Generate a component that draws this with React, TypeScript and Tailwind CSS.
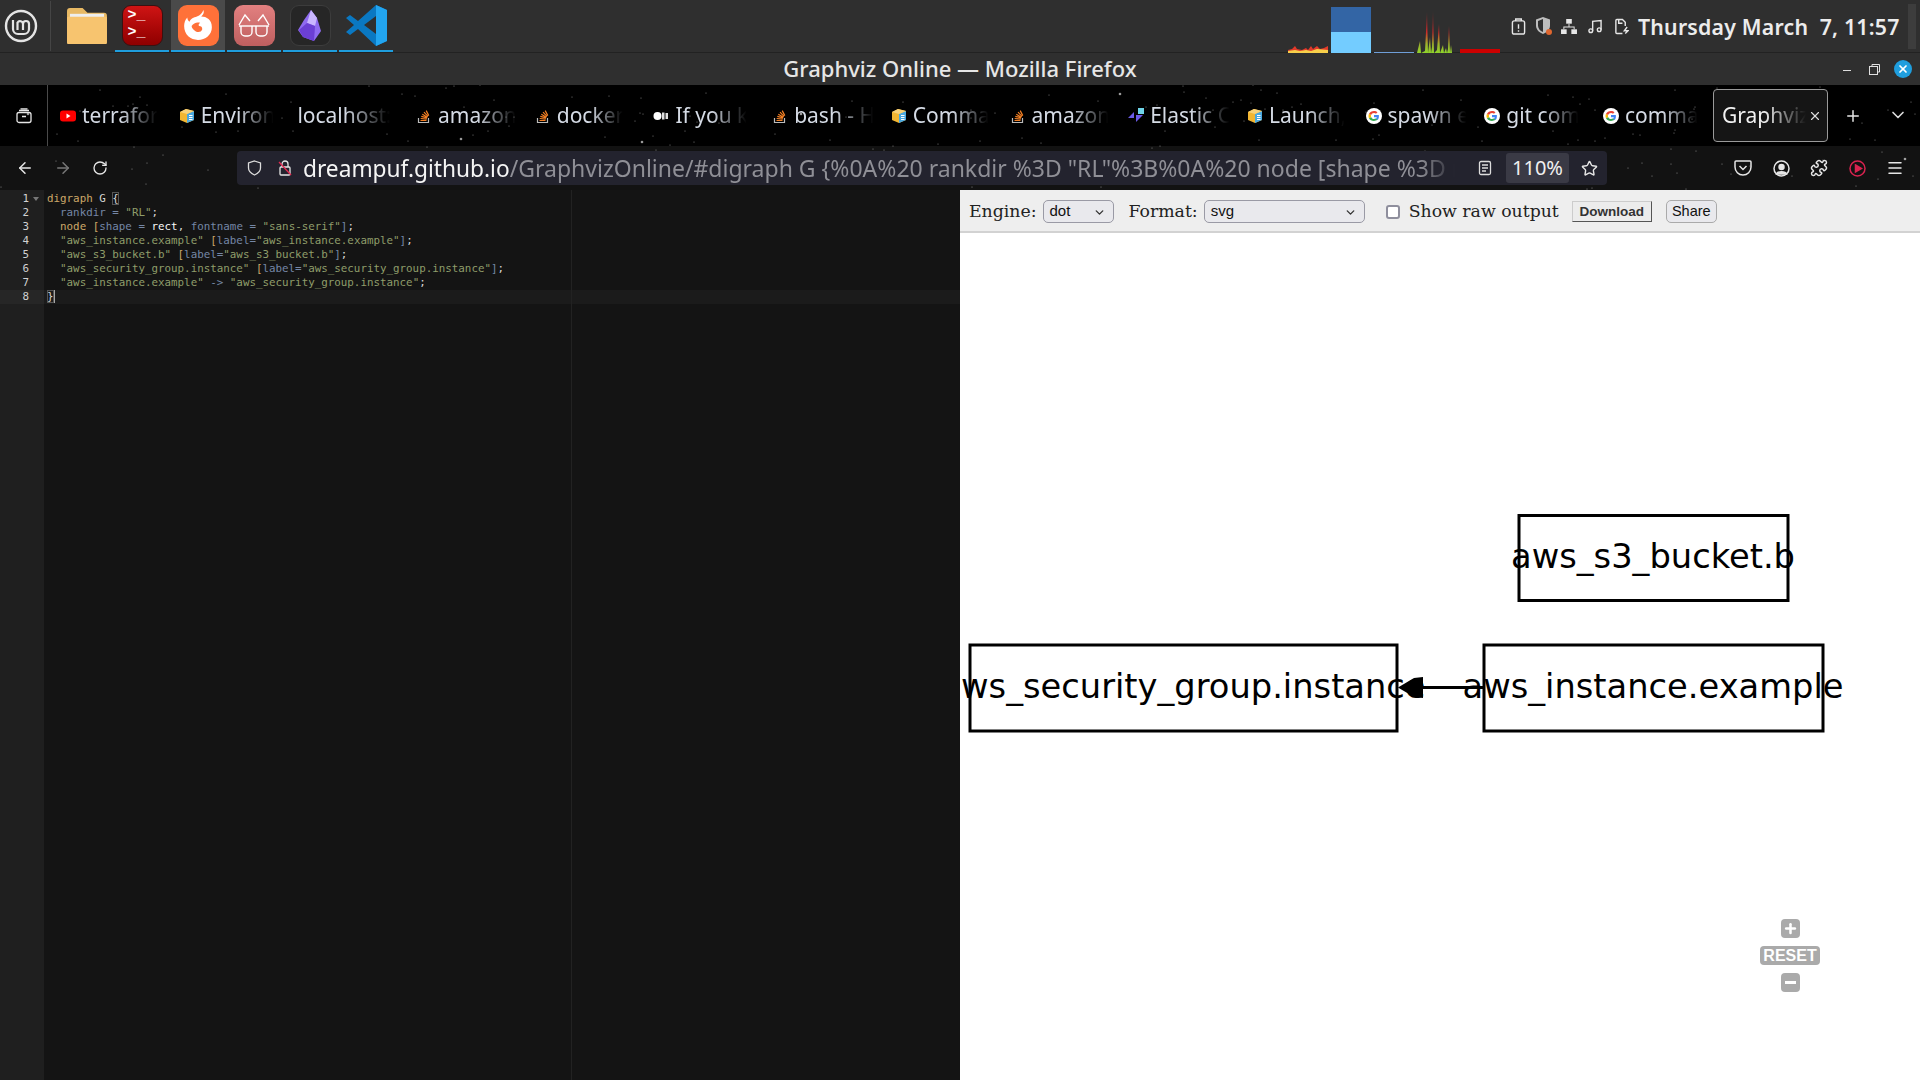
import { ChevronDown, Plus, X, ArrowLeft, ArrowRight, RotateCw, Star, Menu, Puzzle } from "lucide-react";

const UI = "font-['Noto_Sans','Open_Sans',sans-serif]";

// fixed star field that sits behind the firefox theme
const stars: [number, number, number][] = [];
let seed = 7;
for (let i = 0; i < 230; i++) {
  seed = (seed * 7919 + 13) % 104729;
  const x = seed % 1920;
  seed = (seed * 7919 + 13) % 104729;
  const y = 85 + (seed % 105);
  seed = (seed * 7919 + 13) % 104729;
  stars.push([x, y, seed % 23 === 0 ? 1.3 : 0.5]);
}

function Stars({ top, height }: { top: number; height: number }) {
  return (
    <svg width="1920" height={height} viewBox={`0 ${top} 1920 ${height}`} className="absolute left-0 top-0 pointer-events-none">
      {stars.map(([x, y, r], i) => (
        <circle key={i} cx={x} cy={y} r={r} fill="#ffffff" opacity={0.6} />
      ))}
    </svg>
  );
}

function Favicon({ kind }: { kind: string }) {
  if (kind === "yt")
    return (
      <svg width="16" height="16" viewBox="0 0 16 16">
        <rect y="2.5" width="16" height="11" rx="3" fill="#f00" />
        <path d="M6.5 5.5v5l4-2.5z" fill="#fff" />
      </svg>
    );
  if (kind === "box")
    return (
      <svg width="16" height="16" viewBox="0 0 16 16">
        <path d="M1 4l6-3 8 2v9l-7 3-7-3z" fill="#f2b632" />
        <path d="M8 6l7-3v9l-7 3z" fill="#4aa8e0" />
        <path d="M1 4l7 2 7-3-8-2z" fill="#f8d27a" />
        <path d="M10 7.5h3.5M10 9.5h3.5M10 11.5h3.5" stroke="#fff" strokeWidth="1" />
      </svg>
    );
  if (kind === "so")
    return (
      <svg width="14" height="16" viewBox="0 0 14 16">
        <path d="M1.5 10v4.5h10V10" fill="none" stroke="#bbb" strokeWidth="1.2" />
        <path d="M3.5 12.5h6M3.7 10.5l6 .6M4.3 8.3l5.8 1.6M5.3 6.2l5.2 3M7 4.2l4 4.2M9.2 2.6l2.6 5" stroke="#f48024" strokeWidth="1.2" />
      </svg>
    );
  if (kind === "dots")
    return (
      <svg width="16" height="16" viewBox="0 0 16 16">
        <circle cx="4.5" cy="8" r="4" fill="#fff" />
        <path d="M9 4.5h2.5v7H9zM12.5 5h2.5v6h-2.5z" fill="#ddd" />
      </svg>
    );
  if (kind === "elastic")
    return (
      <svg width="16" height="16" viewBox="0 0 16 16">
        <path d="M0 10l6-6v6z" fill="#6b5be6" />
        <path d="M10 0h6v6h-6z" fill="#6fd4e8" />
        <path d="M8 7h7l-7 7v-5z" fill="#6b5be6" />
      </svg>
    );
  if (kind === "g")
    return (
      <svg width="16" height="16" viewBox="0 0 16 16">
        <circle cx="8" cy="8" r="8" fill="#fff" />
        <path d="M12.9 8.2c0-.4 0-.8-.1-1.100H8v2.100h2.800c-.1.700-.5 1.200-1 1.600l1.600 1.300c1-.9 1.500-2.200 1.500-3.900z" fill="#4285f4" />
        <path d="M8 13c1.400 0 2.500-.5 3.400-1.200l-1.600-1.300c-.5.300-1 .5-1.800.5-1.300 0-2.500-.9-2.900-2.100L3 10.200C3.800 11.900 5.800 13 8 13z" fill="#34a853" />
        <path d="M5.100 8.900C5 8.600 5 8.300 5 8s0-.6.100-.9L3 5.800C2.700 6.500 2.500 7.200 2.500 8s.2 1.500.5 2.200z" fill="#fbbc05" />
        <path d="M8 5c.8 0 1.500.3 2 .8l1.500-1.500C10.600 3.500 9.400 3 8 3 5.800 3 3.800 4.100 3 5.800l2.100 1.300C5.500 5.900 6.700 5 8 5z" fill="#ea4335" />
      </svg>
    );
  return null;
}

const tabs = [
  ["yt", "terrafor"],
  ["box", "Environ"],
  ["", "localhost:"],
  ["so", "amazon"],
  ["so", "docker"],
  ["dots", "If you k"],
  ["so", "bash - H"],
  ["box", "Comma"],
  ["so", "amazon"],
  ["elastic", "Elastic C"],
  ["box", "Launch,"],
  ["g", "spawn e"],
  ["g", "git com"],
  ["g", "comma"],
];

function Launcher({ children, active, hover }: { children: React.ReactNode; active?: boolean; hover?: boolean }) {
  return (
    <div className={`w-[54px] flex items-center justify-center border-b-2 ${active ? "border-[#1f9ede]" : "border-transparent"} ${hover ? "bg-[#4a4a4a]" : ""}`}>
      {children}
    </div>
  );
}

function Taskbar() {
  return (
    <div className="h-[53px] shrink-0 flex items-stretch bg-[#2f2f2f] border-b border-[#222222] relative">
      <div className="w-[51px] flex items-center pl-[4px] border-r border-[#454545] my-[1px]">
        <svg width="34" height="34" viewBox="0 0 34 34" fill="none" stroke="#e4e4e4">
          <circle cx="17" cy="17" r="15" strokeWidth="2.4" />
          <path d="M9 11v9a5 5 0 0 0 5 5h6a5 5 0 0 0 5-5v-5a3 3 0 0 0-6 0v6m0-6a3 3 0 0 0-5.500-1.500V21" strokeWidth="2.200" />
        </svg>
      </div>
      <div className="flex ml-[8px] gap-[2px]">
        <Launcher>
          <svg width="41" height="37" viewBox="0 0 42 38">
            <path d="M1 4a3 3 0 0 1 3-3h13l5 5h17a3 3 0 0 1 3 3v26a2 2 0 0 1-2 2H3a2 2 0 0 1-2-2z" fill="#e8b964" />
            <rect x="4" y="7" width="35" height="5" fill="#eeeeee" />
            <rect x="1" y="10" width="41" height="28" rx="1" fill="#f7c46f" />
          </svg>
        </Launcher>
        <Launcher active>
          <div className="w-[41px] h-[41px] rounded-[9px] bg-gradient-to-b from-[#cf1414] to-[#8f0000] border border-[#3a1111] pl-[5px] pt-[1px] text-white font-['Liberation_Mono',monospace] font-bold text-[15px] leading-[17px]">
            <div>&gt;_</div>
            <div>&gt;_</div>
          </div>
        </Launcher>
        <Launcher active hover>
          <div className="w-[41px] h-[41px] rounded-[9px] bg-[#ff7139] flex items-center justify-center">
            <svg width="32" height="32" viewBox="0 0 30 30">
              <path d="M20 1c1 3 0 4-2 6 5 0 10 3 10 10 0 7-6 12-13 12S2 24 2 16c0-3 1-6 3-8 0 2 1 3 2 4 1-3 4-4 7-5 3-1 5-3 6-6z" fill="#fff" />
              <path d="M9 16c2-3 5-4 8-3-1 1-2 2-1 3 2 0 3 1 3 3-1 3-4 3-6 2-2-1-4-3-4-5z" fill="#ff7139" />
            </svg>
          </div>
        </Launcher>
        <Launcher active>
          <div className="w-[41px] h-[41px] rounded-[9px] bg-gradient-to-b from-[#e28080] to-[#bf5f5f] flex items-center justify-center">
            <svg width="34" height="26" viewBox="0 0 34 26" fill="none" stroke="#fff" strokeWidth="1.400">
              <path d="M2 13l6-10 5 6M32 13l-6-10-5 6" />
              <path d="M2 14h30" />
              <path d="M4 14v6a4 4 0 0 0 4 4h3a4 4 0 0 0 4-4v-6M19 14v6a4 4 0 0 0 4 4h3a4 4 0 0 0 4-4v-6" />
            </svg>
          </div>
        </Launcher>
        <Launcher active>
          <div className="w-[41px] h-[41px] rounded-[9px] bg-[#262626] border border-[#3c3c3c] flex items-center justify-center">
            <svg width="24" height="31" viewBox="0 0 24 31">
              <path d="M13 0l6 8 4 13-7 10-11-4-5-7 6-10z" fill="#8f6bf0" />
              <path d="M13 0l6 8-2 8-8-3z" fill="#c9b6ff" />
              <path d="M1 20l8-7 8 3-1 15-11-4z" fill="#6b3fd4" />
            </svg>
          </div>
        </Launcher>
        <Launcher active>
          <svg width="43" height="43" viewBox="0 0 43 43">
            <path d="M31 1l11 5v31l-11 5L13 25l-8 6-4-3 8-7-8-7 4-3 8 6z" fill="#0a78c2" />
            <path d="M31 1l11 5v31l-11 5z" fill="#22a5f0" />
            <path d="M31 12L19 21l12 9z" fill="#2f2f2f" />
          </svg>
        </Launcher>
      </div>

      {/* system monitor graphs */}
      <div className="absolute left-[1288px] top-[7px] h-[46px] flex items-end gap-[3px]">
        <svg width="40" height="46" viewBox="0 0 40 46">
          <path d="M0 46v-3l4-1 3-3 2 3 5 1 4-2 2 2 3-4 2 3 4-3 3 3 4-1 4-2v7z" fill="#e23a2a" />
          <path d="M0 46v-2l7-1 5 1 6-1 5 1 6-2 11 1v3z" fill="#f7cf4a" />
        </svg>
        <div className="w-[40px] h-[46px] bg-[#3365a5] flex items-end">
          <div className="w-full h-[21px] bg-[#73ccff]" />
        </div>
        <div className="w-[40px] h-[46px] flex items-end">
          <div className="w-full h-[1px] bg-[#6f9ed8]" />
        </div>
        <svg width="40" height="46" viewBox="0 0 40 46">
          <defs>
            <linearGradient id="load" gradientUnits="userSpaceOnUse" x1="0" y1="46" x2="0" y2="0">
              <stop offset="0" stopColor="#8fd32c" />
              <stop offset="0.2" stopColor="#9fb02c" />
              <stop offset="0.45" stopColor="#d02a2a" />
              <stop offset="1" stopColor="#4a2a2a" />
            </linearGradient>
          </defs>
          <path d="M0 46l1-4 2-8 1 12 4-2 2-39 1 41 2-16 1 16 1-6 1-36 1 42 3-3 2-26 1 29 3-8 1 8 2-5 1 5 1-4 1-23 1 27 1-8 1 8z" fill="url(#load)" />
        </svg>
        <div className="w-[40px] h-[46px] flex items-end">
          <div className="w-full h-[4px] bg-[#cc0000]" />
        </div>
      </div>

      {/* tray */}
      <div className="absolute left-[1511px] top-[17px] flex items-center gap-[9px] text-[#e6e6e6]">
        <svg width="15" height="17" viewBox="0 0 16 18" fill="none" stroke="currentColor" strokeWidth="1.500">
          <rect x="1.500" y="3" width="13" height="14" rx="2" />
          <path d="M5 3V1h6v2M8 6.500v5M8 13v1.500" />
        </svg>
        <div className="relative w-[17px] h-[18px]">
          <svg width="16" height="17" viewBox="0 0 16 17" fill="#bdbdbd">
            <path d="M8 0l7 2.500v6c0 4-3 7-7 8.500-4-1.500-7-4.500-7-8.500v-6z" />
            <path d="M8 2v13c-3-1.200-5-3.500-5-6.500V4z" fill="#2f2f2f" />
          </svg>
          <span className="absolute right-0 bottom-0 w-[6px] h-[6px] rounded-full bg-[#e0672f]" />
        </div>
        <svg width="16" height="15" viewBox="0 0 17 16" fill="currentColor">
          <rect x="5.500" y="0" width="6" height="5" />
          <rect x="0" y="11" width="6" height="5" />
          <rect x="11" y="11" width="6" height="5" />
          <path d="M8 5h1v3h5.500v3h-1V9h-10v2h-1V8H8z" />
        </svg>
        <svg width="14" height="15" viewBox="0 0 15 15" fill="none" stroke="currentColor" strokeWidth="1.500" className="ml-[2px]">
          <path d="M5 12V2l9-1v10" />
          <circle cx="3" cy="12" r="2" />
          <circle cx="12" cy="11" r="2" />
        </svg>
        <svg width="15" height="17" viewBox="0 0 16 17" fill="none" stroke="currentColor" strokeWidth="1.500" className="ml-[3px]">
          <path d="M9 16H3a1 1 0 0 1-1-1V2a1 1 0 0 1 1-1h6l3 3v4" />
          <path d="M5 1v4h4" />
          <path d="M14 9l-3 4h4l-3 3" />
        </svg>
      </div>
      <div className={`absolute left-[1638px] top-[12px] text-[21.300px] leading-[30px] font-semibold text-[#ececec] whitespace-pre tracking-[0.2px] ${UI}`}>
        Thursday March  7, 11:57
      </div>
      <div className="absolute left-[1908px] top-[4px] w-[8px] h-[45px] bg-[#3d3d3d]" />
    </div>
  );
}

function TitleBar() {
  return (
    <div className={`h-[32px] shrink-0 bg-[#2f2f2f] relative flex items-center justify-center pb-[2px] text-[22px] font-medium text-[#e6e6e6] ${UI}`}>
      Graphviz Online — Mozilla Firefox
      <div className="absolute right-[8px] top-0 h-full flex items-center text-[#e0e0e0]">
        <div className="w-[8px] h-[1.500px] bg-[#dddddd] mt-[3px]" />
        <svg width="11" height="11" viewBox="0 0 11 11" fill="none" stroke="currentColor" className="ml-[18px]">
          <rect x="0.500" y="2.500" width="8" height="8" />
          <path d="M3 2.500V.5h7.500V8H8.500" />
        </svg>
        <div className="w-[18px] h-[18px] ml-[14px] rounded-full bg-[#1f9ede] flex items-center justify-center text-white">
          <X size={12} strokeWidth={3.500} />
        </div>
      </div>
    </div>
  );
}

function TabStrip() {
  return (
    <div className={`h-[61px] shrink-0 bg-black flex items-stretch relative ${UI}`}>
      <Stars top={85} height={61} />
      <div className="w-[48px] shrink-0 border-r border-[#4a4a4a] flex items-center justify-center relative">
        <svg width="16" height="16" viewBox="0 0 16 16" fill="none" stroke="#e6e6e6" strokeWidth="1.300">
          <rect x="1" y="4.500" width="14" height="10" rx="2" />
          <path d="M3 2.500h10M4.500.8h7M6 8.500h4" />
        </svg>
      </div>
      <div className="flex pl-[4px] relative">
        {tabs.map(([icon, label], i) => (
          <div key={i} className="w-[118.700px] pl-[8px] pr-[8px] flex items-center gap-[6px] overflow-hidden">
            {icon && (
              <span className="shrink-0 w-[16px] flex justify-center">
                <Favicon kind={icon} />
              </span>
            )}
            <span className="whitespace-nowrap overflow-hidden text-[21px] text-[#d5dbe5] [mask-image:linear-gradient(to_right,black_50%,transparent_98%)]">
              {label}
            </span>
          </div>
        ))}
      </div>
      <div className="absolute left-[1713px] top-[4px] w-[115px] h-[53px] rounded-[4px] border border-[#9a9a9a] bg-[#151515] flex items-center pl-[8px] text-[21px] text-[#f2f2f2]">
        <span className="whitespace-nowrap overflow-hidden w-[84px] [mask-image:linear-gradient(to_right,black_50%,transparent_100%)]">Graphviz</span>
        <X size={14} className="ml-[2px] text-[#dddddd]" />
      </div>
      <Plus size={18} className="absolute left-[1844px] top-[22px] text-[#e6e6e6]" />
      <ChevronDown size={20} className="absolute left-[1888px] top-[20px] text-[#dddddd]" />
    </div>
  );
}

function NavBar() {
  return (
    <div className={`h-[44px] shrink-0 bg-[#121212] flex items-center relative ${UI}`}>
      <Stars top={146} height={44} />
      <div className="w-[237px] shrink-0 flex items-center pl-[16px] gap-[20px] relative">
        <ArrowLeft size={18} className="text-[#e6e6e6]" />
        <ArrowRight size={18} className="text-[#777777]" />
        <RotateCw size={16} className="text-[#e6e6e6]" />
      </div>
      <div className="w-[1370px] h-[34px] rounded-[4px] bg-[#23232e] flex items-center pl-[10px] pr-[4px] relative">
        <svg width="15" height="16" viewBox="0 0 15 16" fill="none" stroke="#dddddd" strokeWidth="1.300" className="shrink-0">
          <path d="M7.500 1l6 2v5c0 3-2.500 5.500-6 7-3.500-1.500-6-4-6-7V3z" />
        </svg>
        <svg width="14" height="16" viewBox="0 0 14 16" fill="none" className="shrink-0 ml-[16px]">
          <rect x="2" y="7" width="10" height="8" rx="1" stroke="#e6e6e6" strokeWidth="1.300" />
          <path d="M4 7V4a3 3 0 0 1 6 0v3" stroke="#e6e6e6" strokeWidth="1.300" />
          <path d="M1 2l12 13" stroke="#e22850" strokeWidth="1.300" />
        </svg>
        <div className="ml-[11px] w-[1152px] shrink-0 whitespace-nowrap overflow-hidden text-[23px] leading-[34px] text-[#8f8f96] [mask-image:linear-gradient(to_right,black_97%,transparent_100%)]">
          <span className="text-[#f5f5f5] text-[22.700px]">dreampuf.github.io</span>/GraphvizOnline/#digraph G {"{"}%0A%20 rankdir %3D "RL"%3B%0A%20 node [shape %3D r
        </div>
        <svg width="14" height="16" viewBox="0 0 14 16" fill="none" stroke="#dddddd" strokeWidth="1.300" className="shrink-0 ml-auto mr-[14px]">
          <rect x="1.500" y="1.500" width="11" height="13" rx="1.500" />
          <path d="M4 5h6M4 8h6M4 11h4" />
        </svg>
        <div className="w-[63px] h-[30px] rounded-[3px] bg-[#3a3a45] text-[#f0f0f0] text-[20px] flex items-center justify-center shrink-0">110%</div>
        <Star size={17} className="text-[#e6e6e6] ml-[12px] mr-[5px] shrink-0" />
      </div>
      <div className="absolute left-[1734px] top-0 h-full flex items-center gap-[20.500px] text-[#e6e6e6]">
        <svg width="18" height="16" viewBox="0 0 18 16" fill="none" stroke="currentColor" strokeWidth="1.500">
          <path d="M2 1h14a1 1 0 0 1 1 1v5a8 8 0 0 1-16 0V2a1 1 0 0 1 1-1z" />
          <path d="M5.500 6L9 9.500 12.500 6" />
        </svg>
        <svg width="17" height="17" viewBox="0 0 17 17" fill="none" stroke="currentColor" strokeWidth="1.500">
          <circle cx="8.500" cy="8.500" r="7.500" />
          <circle cx="8.500" cy="7" r="2.500" fill="currentColor" />
          <path d="M3.500 14c1-3 9-3 10 0z" fill="currentColor" />
        </svg>
        <Puzzle size={18} />
        <svg width="17" height="17" viewBox="0 0 17 17" fill="none" stroke="#d8234f" strokeWidth="1.500">
          <circle cx="8.500" cy="8.500" r="7.500" />
          <path d="M6.500 5l6 3.500-6 3.500z" fill="#d8234f" />
        </svg>
        <Menu size={18} />
      </div>
    </div>
  );
}

function Code({ c, children }: { c: string; children: React.ReactNode }) {
  return <span className={c}>{children}</span>;
}

// twilight theme of the ace editor
const KW = "text-[#cda869]";
const ATTR = "text-[#7587a6]";
const STR = "text-[#8f9d6a]";
const BRK = "text-[#cda869]";
const PLAIN = "text-[#d8d8d8]";
const WHITE = "text-[#f8f8f8]";

function Editor() {
  const lines: React.ReactNode[] = [
    <>
      <Code c={KW}>digraph</Code> <Code c={PLAIN}>G</Code> <Code c={`${PLAIN} outline outline-1 -outline-offset-1 outline-[#555555]`}>{"{"}</Code>
    </>,
    <>
      {"  "}<Code c={ATTR}>rankdir</Code> <Code c={ATTR}>=</Code> <Code c={STR}>"RL"</Code><Code c={PLAIN}>;</Code>
    </>,
    <>
      {"  "}<Code c={KW}>node</Code> <Code c={BRK}>[</Code><Code c={ATTR}>shape</Code> <Code c={ATTR}>=</Code> <Code c={WHITE}>rect</Code><Code c={PLAIN}>,</Code> <Code c={ATTR}>fontname</Code> <Code c={ATTR}>=</Code> <Code c={STR}>"sans-serif"</Code><Code c={ATTR}>]</Code><Code c={PLAIN}>;</Code>
    </>,
    <>
      {"  "}<Code c={STR}>"aws_instance.example"</Code> <Code c={BRK}>[</Code><Code c={ATTR}>label</Code><Code c={ATTR}>=</Code><Code c={STR}>"aws_instance.example"</Code><Code c={ATTR}>]</Code><Code c={PLAIN}>;</Code>
    </>,
    <>
      {"  "}<Code c={STR}>"aws_s3_bucket.b"</Code> <Code c={BRK}>[</Code><Code c={ATTR}>label</Code><Code c={ATTR}>=</Code><Code c={STR}>"aws_s3_bucket.b"</Code><Code c={ATTR}>]</Code><Code c={PLAIN}>;</Code>
    </>,
    <>
      {"  "}<Code c={STR}>"aws_security_group.instance"</Code> <Code c={BRK}>[</Code><Code c={ATTR}>label</Code><Code c={ATTR}>=</Code><Code c={STR}>"aws_security_group.instance"</Code><Code c={ATTR}>]</Code><Code c={PLAIN}>;</Code>
    </>,
    <>
      {"  "}<Code c={STR}>"aws_instance.example"</Code> <Code c={ATTR}>-&gt;</Code> <Code c={STR}>"aws_security_group.instance"</Code><Code c={PLAIN}>;</Code>
    </>,
    <>
      <Code c={`${PLAIN} outline outline-1 -outline-offset-1 outline-[#555555]`}>{"}"}</Code>
      <span className="inline-block w-[1px] h-[13px] bg-[#a7a7a7] align-top" />
    </>,
  ];
  return (
    <div className="w-[960px] h-full flex bg-[#141414] font-['DejaVu_Sans_Mono','Liberation_Mono',monospace] text-[10.850px] leading-[14px] relative">
      <div className="w-[44px] shrink-0 bg-[#1f1f1f] pt-[2px] text-[#d2d2d2]">
        {lines.map((_, i) => (
          <div key={i} className={`h-[14px] relative pr-[15px] text-right ${i === 7 ? "bg-[#262626]" : ""}`}>
            {i + 1}
            {i === 0 && <span className="absolute right-[5px] top-[5px] border-x-[3px] border-t-[4px] border-x-transparent border-t-[#777777]" />}
          </div>
        ))}
      </div>
      <div className="flex-1 pt-[2px] whitespace-pre">
        {lines.map((l, i) => (
          <div key={i} className={`h-[14px] pl-[3px] ${i === 7 ? "bg-[#1b1b1b]" : ""}`}>
            {l}
          </div>
        ))}
      </div>
      <div className="absolute left-[571px] top-0 bottom-0 w-[1px] bg-[#222222]" />
    </div>
  );
}

function Select({ label, className }: { label: string; className: string }) {
  return (
    <div className={`relative h-[23px] rounded-[5px] border border-[#9a9aa5] bg-[#e9e9ed] flex items-center pl-[6px] font-['Liberation_Sans',sans-serif] text-[15px] text-[#111111] ${className}`}>
      {label}
      <ChevronDown size={13} strokeWidth={2.500} className="absolute right-[7px] top-[5px] text-[#333333]" />
    </div>
  );
}

function Toolbar() {
  return (
    <div className="h-[43px] shrink-0 bg-[#eeeeee] border-b-2 border-[#d2d2d2] flex items-center pl-[9px] pt-[2px] font-['DejaVu_Serif','Liberation_Serif',serif] text-[17.300px] text-[#222222]">
      <span>Engine:</span>
      <Select label="dot" className="w-[71px] ml-[6px]" />
      <span className="ml-[15px]">Format:</span>
      <Select label="svg" className="w-[161px] ml-[6px]" />
      <span className="ml-[21px] w-[14px] h-[14px] rounded-[3px] border-2 border-[#8f8f9d] bg-white" />
      <span className="ml-[9px]">Show raw output</span>
      <button className="ml-[13px] w-[80px] h-[21px] border border-[#555555] border-t-[#cccccc] border-l-[#cccccc] bg-[#ececec] font-['Liberation_Sans',sans-serif] text-[13.500px] font-bold text-[#333333]">
        Download
      </button>
      <button className="ml-[14px] w-[51px] h-[23px] rounded-[5px] border border-[#aaaaaa] bg-[#e9e9ed] font-['Liberation_Sans',sans-serif] text-[14.500px] text-[#111111]">
        Share
      </button>
    </div>
  );
}

function Graph() {
  return (
    <div className="flex-1 relative bg-white">
      <svg width="960" height="847" viewBox="960 233 960 847" className="block">
        <g fill="none" stroke="#000" strokeWidth="3">
          <rect x="1519" y="515.500" width="269" height="85" />
          <rect x="1484" y="645" width="339" height="86" />
          <rect x="970" y="645" width="427" height="86" />
        </g>
        <path d="M1483 687.500h-65" stroke="#000" strokeWidth="3" />
        <path d="M1423 677v21l-9-1-16-9.500 16-9.500z" fill="#000" />
        <g fontFamily="'DejaVu Sans', sans-serif" fontSize="33.700" textAnchor="middle" fill="#000">
          <text x="1653" y="568">aws_s3_bucket.b</text>
          <text x="1653" y="698">aws_instance.example</text>
          <text x="1183" y="698">aws_security_group.instance</text>
        </g>
      </svg>
      <div className="absolute left-[800px] top-[686px] w-[60px] flex flex-col items-center gap-[8px] font-['Liberation_Sans',sans-serif] font-bold text-white">
        <div className="w-[19px] h-[19px] rounded-[4px] bg-[#aaaaaa] flex items-center justify-center">
          <Plus size={15} strokeWidth={4} />
        </div>
        <div className="w-[60px] h-[19px] rounded-[4px] bg-[#aaaaaa] text-[16px] leading-[19px] text-center">RESET</div>
        <div className="w-[19px] h-[19px] rounded-[4px] bg-[#aaaaaa] flex items-center justify-center">
          <div className="w-[11px] h-[3px] bg-white" />
        </div>
      </div>
    </div>
  );
}

export default function App() {
  return (
    <div className="w-[1920px] h-[1080px] flex flex-col overflow-hidden bg-[#2f2f2f] relative">
      <Taskbar />
      <TitleBar />
      <TabStrip />
      <NavBar />
      <div className="flex-1 flex min-h-0">
        <Editor />
        <div className="w-[960px] flex flex-col">
          <Toolbar />
          <Graph />
        </div>
      </div>
    </div>
  );
}
